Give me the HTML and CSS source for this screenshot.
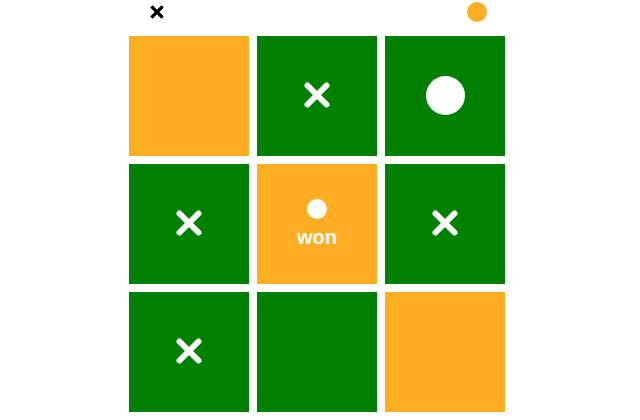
FILE: index.html
```html
<!DOCTYPE html>
<html>
<head>
<meta charset="utf-8">
<link rel="stylesheet" href="styles.css">
</head>
<body>
<div class="wrap">
  <div class="app">
    <div class="header">
      <svg class="turn-x" viewBox="0 0 14 14" width="14" height="14"><path d="M2.5 2.5 L11.5 11.5 M11.5 2.5 L2.5 11.5" stroke="#000" stroke-width="3.2" stroke-linecap="square"/></svg>
      <span class="turn-o"></span>
    </div>
    <div class="board">
      <div class="cell orange"></div>
      <div class="cell green"><svg class="mark-x" viewBox="0 0 28 28" width="28" height="28"><path d="M4.5 4.5 L23.5 23.5 M23.5 4.5 L4.5 23.5" stroke="#fff" stroke-width="6" stroke-linecap="round"/></svg></div>
      <div class="cell green"><span class="mark-o"></span></div>
      <div class="cell green"><svg class="mark-x" viewBox="0 0 28 28" width="28" height="28"><path d="M4.5 4.5 L23.5 23.5 M23.5 4.5 L4.5 23.5" stroke="#fff" stroke-width="6" stroke-linecap="round"/></svg></div>
      <div class="cell orange won-cell"><span class="mark-o small"></span><span class="won">won</span></div>
      <div class="cell green"><svg class="mark-x" viewBox="0 0 28 28" width="28" height="28"><path d="M4.5 4.5 L23.5 23.5 M23.5 4.5 L4.5 23.5" stroke="#fff" stroke-width="6" stroke-linecap="round"/></svg></div>
      <div class="cell green"><svg class="mark-x" viewBox="0 0 28 28" width="28" height="28"><path d="M4.5 4.5 L23.5 23.5 M23.5 4.5 L4.5 23.5" stroke="#fff" stroke-width="6" stroke-linecap="round"/></svg></div>
      <div class="cell green"></div>
      <div class="cell orange"></div>
    </div>
  </div>
</div>
</body>
</html>
```
FILE: styles.css
```css
html, body {
  margin: 0;
  padding: 0;
  background: #fff;
  font-family: "Liberation Sans", Arial, sans-serif;
}
.wrap {
  display: flex;
  justify-content: center;
  padding-right: 6px;
}
.app {
  width: 376px;
  display: flex;
  flex-direction: column;
}
.header {
  height: 24px;
  padding: 0 18px;
  display: flex;
  align-items: center;
  justify-content: space-between;
  margin-bottom: 12px;
}
.turn-x {
  display: block;
  margin-left: 3px;
}
.turn-o {
  width: 20px;
  height: 20px;
  border-radius: 50%;
  background: #ffad22;
  margin-top: -1px;
}
.board {
  display: grid;
  grid-template-columns: repeat(3, 120px);
  grid-template-rows: repeat(3, 120px);
  gap: 8px;
}
.cell {
  display: flex;
  flex-direction: column;
  align-items: center;
  justify-content: center;
}
.green { background: #008000; }
.orange { background: #ffad22; }
.mark-x { display: block; margin-top: -2px; }
.mark-o {
  width: 39px;
  height: 39px;
  border-radius: 50%;
  background: #fff;
  margin-top: -2px;
}
.mark-o.small {
  width: 20px;
  height: 20px;
  margin-top: -1px;
}
.won {
  color: #fff;
  font-weight: bold;
  font-size: 20px;
  line-height: 23px;
  margin-top: 7px;
}
```
